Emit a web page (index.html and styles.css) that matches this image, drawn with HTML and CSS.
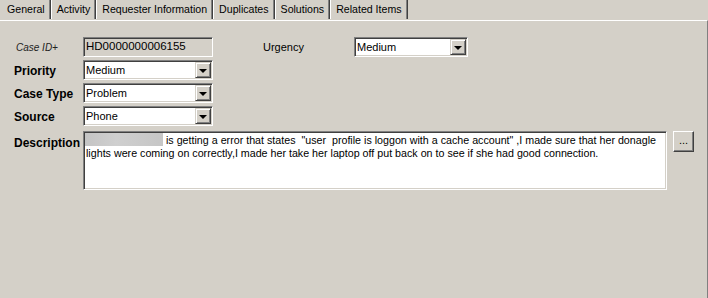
FILE: index.html
```html
<!DOCTYPE html>
<html lang="en">
<head>
    <meta charset="UTF-8">
    <title>Case - General</title>
    <link rel="stylesheet" href="styles.css">
</head>
<body>
    <div class="tabs">
        <div class="tab active">General</div>
        <div class="tab">Activity</div>
        <div class="tab">Requester Information</div>
        <div class="tab">Duplicates</div>
        <div class="tab">Solutions</div>
        <div class="tab">Related Items</div>
    </div>

    <div class="panel">
        <div class="row first">
            <div class="label italic">Case ID+</div>
            <div class="field readonly">HD0000000006155</div>
            <div class="label urgency">Urgency</div>
            <div class="select wide">
                <span class="value">Medium</span>
                <span class="drop"><span class="arrow"></span></span>
            </div>
        </div>
        <div class="row">
            <div class="label bold">Priority</div>
            <div class="select">
                <span class="value">Medium</span>
                <span class="drop"><span class="arrow"></span></span>
            </div>
        </div>
        <div class="row">
            <div class="label bold">Case Type</div>
            <div class="select">
                <span class="value">Problem</span>
                <span class="drop"><span class="arrow"></span></span>
            </div>
        </div>
        <div class="row">
            <div class="label bold">Source</div>
            <div class="select">
                <span class="value">Phone</span>
                <span class="drop"><span class="arrow"></span></span>
            </div>
        </div>
        <div class="row desc-row">
            <div class="label bold desc-label">Description</div>
            <div class="textarea">
                <div class="line"><span class="redacted"></span> is getting a error that states &nbsp;"user &nbsp;profile is loggon with a cache account" ,I made sure that her donagle</div>
                <div class="line">lights were coming on correctly,I made her take her laptop off put back on to see if she had good connection.</div>
            </div>
            <button class="more">...</button>
        </div>
    </div>
</body>
</html>
```

FILE: styles.css
```css
body {
    margin: 0;
    width: 708px;
    height: 298px;
    background-color: #d4d0c8;
    font-family: "Liberation Sans", Arial, sans-serif;
    font-size: 10.7px;
    color: #000;
    overflow: hidden;
}
.tabs {
    display: flex;
    height: 20px;
}
.tab {
    height: 19px;
    line-height: 19px;
    padding: 0 5px 0 5px;
    border-left: 1px solid #fff;
    border-right: 1px solid #404040;
    box-shadow: inset -1px 0 0 #808080;
    white-space: nowrap;
    font-size: 10.6px;
}
.tab.active {
    padding-left: 7px;
    border-left: none;
}
.panel {
    height: 278px;
    border-top: 1px solid #fff;
    border-right: 1px solid #808080;
    box-sizing: border-box;
    padding: 16px 0 0 14px;
}
.row {
    display: flex;
    align-items: center;
    height: 20px;
    margin-top: 3px;
}
.row.first {
    margin-top: 0;
}
.label {
    width: 69px;
    flex-shrink: 0;
}
.label.italic {
    font-style: italic;
    font-size: 10px;
    color: #222;
    padding-left: 2px;
    width: 67px;
}
.label.bold {
    font-weight: bold;
    font-size: 12px;
    padding-top: 2px;
}
.label.urgency {
    margin-left: 50px;
    width: 91px;
    font-size: 11px;
}
.field, .select {
    box-sizing: border-box;
    width: 130px;
    height: 20px;
    border-top: 1px solid #808080;
    border-left: 1px solid #808080;
    border-right: 1px solid #fff;
    border-bottom: 1px solid #fff;
    box-shadow: inset 1px 1px 0 #404040, inset -1px -1px 0 #d4d0c8;
    line-height: 17px;
    padding-left: 2px;
    white-space: nowrap;
}
.field.readonly {
    background-color: #d4d0c8;
    font-size: 11.5px;
}
.select {
    display: flex;
    justify-content: space-between;
    align-items: center;
    background-color: #fff;
    padding-right: 1px;
    font-size: 11px;
}
.select.wide {
    width: 114px;
}
.drop {
    display: flex;
    align-items: center;
    justify-content: center;
    box-sizing: border-box;
    width: 16px;
    height: 16px;
    background-color: #d4d0c8;
    border-top: 1px solid #d4d0c8;
    border-left: 1px solid #d4d0c8;
    border-right: 1px solid #404040;
    border-bottom: 1px solid #404040;
    box-shadow: inset 1px 1px 0 #fff, inset -1px -1px 0 #808080;
}
.arrow {
    width: 0;
    height: 0;
    border-left: 4px solid transparent;
    border-right: 4px solid transparent;
    border-top: 4px solid #000;
    margin-top: 1px;
}
.desc-row {
    align-items: flex-start;
    height: 59px;
    margin-top: 5px;
}
.desc-label {
    margin-top: 3px;
}
.textarea {
    box-sizing: border-box;
    width: 584px;
    height: 59px;
    background-color: #fff;
    border-top: 1px solid #808080;
    border-left: 1px solid #808080;
    border-right: 1px solid #fff;
    border-bottom: 1px solid #fff;
    box-shadow: inset 1px 1px 0 #404040, inset -1px -1px 0 #d4d0c8;
    padding: 2px 0 0 2px;
}
.line {
    height: 13px;
    line-height: 13px;
    white-space: nowrap;
}
.redacted {
    display: inline-block;
    width: 78px;
    height: 13px;
    vertical-align: top;
    margin: -1px 0 0 -1px;
    background: linear-gradient(90deg, #c4c4c4, #cfcfcf 40%, #c6c6c6);
}
.more {
    box-sizing: border-box;
    margin-left: 6px;
    width: 21px;
    height: 21px;
    padding: 0 0 4px 0;
    font-family: "Liberation Sans", Arial, sans-serif;
    font-size: 11px;
    background-color: #d4d0c8;
    border-top: 1px solid #fff;
    border-left: 1px solid #fff;
    border-right: 1px solid #404040;
    border-bottom: 1px solid #404040;
    box-shadow: inset -1px -1px 0 #808080;
}
```
